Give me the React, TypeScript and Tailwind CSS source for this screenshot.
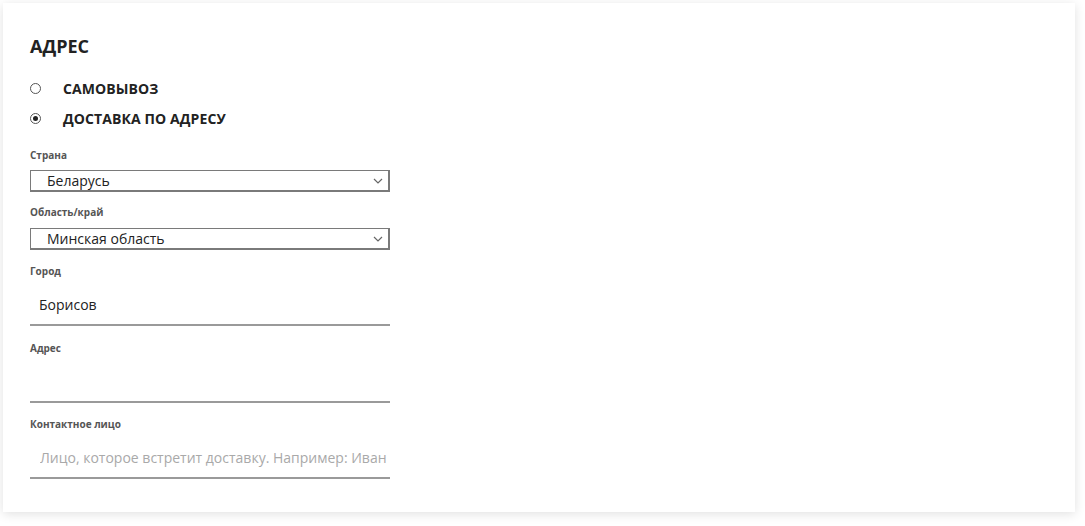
import React, { useState } from "react";

const Chevron: React.FC = () => (
    <svg width="10" height="6" viewBox="0 0 10 6" className="absolute right-[5px] top-1/2 -translate-y-1/2 pointer-events-none">
        <path d="M1 1l4 4 4-4" fill="none" stroke="#666" strokeWidth="1.2" />
    </svg>
);

const Label: React.FC<{ text: string; className?: string }> = ({ text, className }) => (
    <div className={`h-[14px] leading-[14px] text-[10px] font-bold text-[#555] ${className || ""}`}>{text}</div>
);

const App: React.FC = () => {
    const [mode, setMode] = useState<"pickup" | "delivery">("delivery");
    const [city, setCity] = useState("Борисов");

    const radios = [
        { id: "pickup" as const, label: "САМОВЫВОЗ" },
        { id: "delivery" as const, label: "ДОСТАВКА ПО АДРЕСУ" },
    ];

    return (
        <div className="min-h-[526px] bg-white pt-[3px] pl-[3px] font-['Open_Sans',sans-serif] text-[#222]">
            <div className="w-[1072px] h-[509px] bg-white shadow-[0_2px_10px_rgba(0,0,0,0.12)] pt-[31px] pl-[27px]">
                <h2 className="h-[24px] leading-[24px] text-[18px] font-bold text-[#222]">АДРЕС</h2>

                <div className="mt-[20px] flex flex-col gap-[10px]">
                    {radios.map((r) => (
                        <label key={r.id} className="h-[20px] flex items-center cursor-pointer">
                            <span className="w-[11px] h-[11px] rounded-full border border-[#555] bg-white flex items-center justify-center">
                                {mode === r.id && <span className="w-[5px] h-[5px] rounded-full bg-[#222]" />}
                            </span>
                            <input
                                type="radio"
                                className="hidden"
                                checked={mode === r.id}
                                onChange={() => setMode(r.id)}
                            />
                            <span className="ml-[22px] text-[14px] font-bold tracking-[0.1px] text-[#222]">{r.label}</span>
                        </label>
                    ))}
                </div>

                <div className="w-[360px]">
                    <Label text="Страна" className="mt-[20px]" />
                    <div className="relative mt-[8px] h-[22px] border border-[#7a7a7a] border-r-2 border-b-2">
                        <div className="pl-[16px] h-full flex items-center text-[14px] text-[#222]">Беларусь</div>
                        <Chevron />
                    </div>

                    <Label text="Область/край" className="mt-[13px]" />
                    <div className="relative mt-[9px] h-[22px] border border-[#7a7a7a] border-r-2 border-b-2">
                        <div className="pl-[16px] h-full flex items-center text-[14px] text-[#222]">Минская область</div>
                        <Chevron />
                    </div>

                    <Label text="Город" className="mt-[14px]" />
                    <input
                        value={city}
                        onChange={(e) => setCity(e.target.value)}
                        className="block w-full h-[48px] pt-[6px] pl-[9px] border-b-2 border-[#9a9a9a] text-[14px] text-[#222] outline-none bg-transparent"
                    />

                    <Label text="Адрес" className="mt-[15px]" />
                    <input
                        className="block w-full h-[48px] pt-[6px] pl-[9px] border-b-2 border-[#9a9a9a] text-[14px] text-[#222] outline-none bg-transparent"
                    />

                    <Label text="Контактное лицо" className="mt-[14px]" />
                    <input
                        placeholder="Лицо, которое встретит доставку. Например: Иван"
                        className="block w-full h-[48px] pt-[6px] pl-[10px] border-b-2 border-[#9a9a9a] text-[14px] text-[#222] placeholder:text-[#a9a9a9] outline-none bg-transparent"
                    />
                </div>
            </div>
        </div>
    );
};

export default App;
